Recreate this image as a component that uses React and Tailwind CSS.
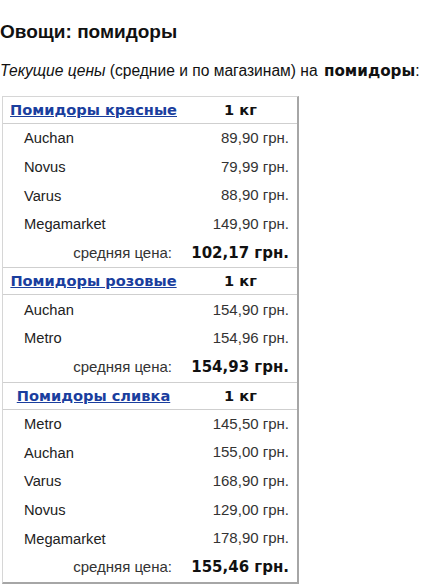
import React from 'react';

const groups = [
  {
    name: 'Помидоры красные',
    unit: '1 кг',
    rows: [
      ['Auchan', '89,90 грн.'],
      ['Novus', '79,99 грн.'],
      ['Varus', '88,90 грн.'],
      ['Megamarket', '149,90 грн.'],
    ],
    avg: '102,17 грн.',
  },
  {
    name: 'Помидоры розовые',
    unit: '1 кг',
    rows: [
      ['Auchan', '154,90 грн.'],
      ['Metro', '154,96 грн.'],
    ],
    avg: '154,93 грн.',
  },
  {
    name: 'Помидоры сливка',
    unit: '1 кг',
    rows: [
      ['Metro', '145,50 грн.'],
      ['Auchan', '155,00 грн.'],
      ['Varus', '168,90 грн.'],
      ['Novus', '129,00 грн.'],
      ['Megamarket', '178,90 грн.'],
    ],
    avg: '155,46 грн.',
  },
];

const arial = "[font-family:'Liberation_Sans',Arial,sans-serif]";
const verdana = "[font-family:'DejaVu_Sans',Verdana,sans-serif]";

const Group = ({ group, last }) => (
  <div className={last ? '' : 'border-b border-[#cfcfcf]'}>
    {/* header */}
    <div className="flex h-[27px] items-center border-b border-[#cfcfcf]">
      <div className="w-[181px] text-center">
        <a href="#" className={`${verdana} text-[14.6px] font-bold text-[#1a3e9e] underline`}>
          {group.name}
        </a>
      </div>
      <div className={`${verdana} flex-1 text-center text-[14.6px] font-bold text-[#111]`}>
        {group.unit}
      </div>
    </div>

    {group.rows.map(([shop, price]) => (
      <div key={shop} className={`${arial} flex h-[28.7px] items-center text-[15px]`}>
        <div className="w-[181px] pl-[21px] text-[14.7px] text-[#222]">{shop}</div>
        <div className="flex-1 pr-[8px] text-right text-[#333]">{price}</div>
      </div>
    ))}

    {/* average */}
    <div className="flex h-[28.7px] items-center">
      <div className={`${arial} w-[181px] pr-[12px] text-right text-[15px] text-[#333]`}>
        средняя цена:
      </div>
      <div className={`${verdana} flex-1 pr-[8px] text-right text-[15px] font-bold text-[#111]`}>
        {group.avg}
      </div>
    </div>
  </div>
);

export default function App() {
  return (
    <div className={`${arial} min-h-[587px] bg-white text-[#111]`}>
      <h1 className="pt-[21px] text-[19px] font-bold leading-[22px]">Овощи: помидоры</h1>
      <p className="mt-[18px] whitespace-nowrap text-[15.6px] leading-[20px]">
        <i>Текущие цены</i> (средние и по магазинам) на{' '}
        <b className={`${verdana} ml-[2px] text-[15.2px]`}>помидоры</b>:
      </p>

      <div className="ml-[2px] mt-[15px] w-[297px] border-l border-t border-r-2 border-b-2 border-l-[#d6d6d6] border-t-[#d6d6d6] border-r-[#a6a6a6] border-b-[#a6a6a6]">
        {groups.map((g, i) => (
          <Group key={g.name} group={g} last={i === groups.length - 1} />
        ))}
      </div>
    </div>
  );
}
